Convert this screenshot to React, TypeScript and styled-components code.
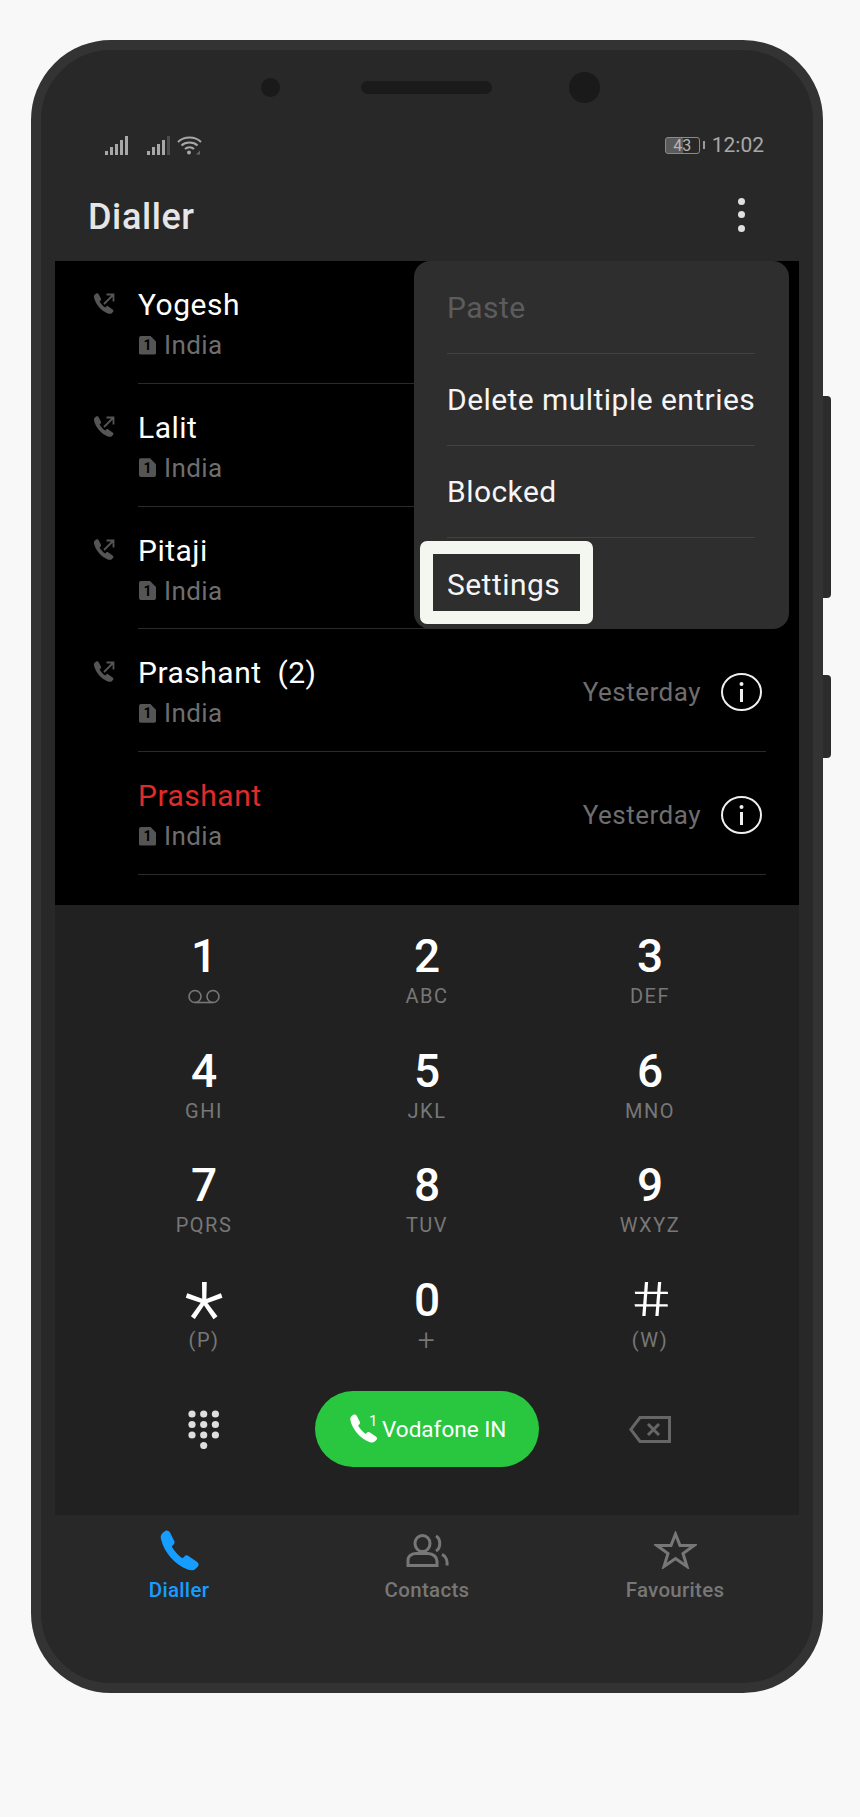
import styled, { createGlobalStyle } from "styled-components";

const GlobalStyle = createGlobalStyle`
    html, body {
        margin: 0;
        background: #f8f8f8;
        font-family: Roboto, "Liberation Sans", sans-serif;
    }
    * { box-sizing: border-box; }
`;

// phone body
const Page = styled.div`
    width: 860px;
    height: 1817px;
    padding: 40px 37px 0 31px;
`;
const Phone = styled.div`
    position: relative;
    width: 792px;
    height: 1653px;
    padding: 0 14px;
    display: flex;
    flex-direction: column;
    background: #282828;
    border: solid #333333;
    border-width: 10px 10px;
    border-radius: 80px;
`;
const SideButton = styled.div<{ $top: number; $height: number }>`
    position: absolute;
    right: -18px;
    top: ${(p) => p.$top}px;
    width: 8px;
    height: ${(p) => p.$height}px;
    background: #2c2c2c;
    border-radius: 0 4px 4px 0;
`;

// camera + speaker
const Sensors = styled.div`
    height: 74px;
    flex-shrink: 0;
    padding-left: 206px;
    display: flex;
    align-items: center;
`;
const Lens = styled.div<{ $size: number; $gap: number }>`
    width: ${(p) => p.$size}px;
    height: ${(p) => p.$size}px;
    margin-right: ${(p) => p.$gap}px;
    border-radius: 50%;
    background: #1a1a1a;
`;
const Speaker = styled.div`
    width: 131px;
    height: 13px;
    margin-right: 77px;
    border-radius: 7px;
    background: #1a1a1a;
`;

// status bar
const StatusBar = styled.div`
    height: 44px;
    flex-shrink: 0;
    padding: 0 35px 2px 50px;
    display: flex;
    align-items: center;
    color: #a8a8a8;
`;
const SignalIcons = styled.div`
    display: flex;
    align-items: flex-end;
    gap: 7px;
    flex: 1;
`;
const SimSignal = styled.div`
    display: flex;
    margin-right: 12px;
`;
const Battery = styled.div`
    position: relative;
    width: 35px;
    height: 17px;
    margin-right: 2px;
    border: 1.5px solid #8a8a8a;
    border-radius: 3px;
    display: flex;
    align-items: center;
    justify-content: center;
    font-size: 16px;
    color: #b5b5b5;
    background: linear-gradient(90deg, #5a5a5a 50%, transparent 50%);
    &::after {
        content: "";
        position: absolute;
        right: -6px;
        top: 3px;
        width: 2px;
        height: 8px;
        background: #9a9a9a;
    }
`;
const Clock = styled.div`
    margin-left: 10px;
    font-size: 21px;
    line-height: 26px;
`;

// title bar
const TitleBar = styled.div`
    height: 93px;
    flex-shrink: 0;
    padding: 0 54px 0 33px;
    display: flex;
    align-items: center;
    justify-content: space-between;
`;
const Title = styled.h1`
    margin: 5px 0 0;
    font-size: 36px;
    font-weight: 500;
    letter-spacing: 0.6px;
    color: #e6e6e6;
`;
const MoreDots = styled.div`
    display: flex;
    flex-direction: column;
    gap: 6.5px;
`;
const MoreDot = styled.span`
    width: 7px;
    height: 7px;
    border-radius: 50%;
    background: #e0e0e0;
`;

// call list
const List = styled.div`
    position: relative;
    height: 644px;
    flex-shrink: 0;
    background: #000;
`;
const Row = styled.div`
    height: 122.75px;
    padding-left: 38px;
    display: flex;
`;
const CallIconSlot = styled.div`
    width: 22px;
    margin-right: 23px;
    padding-top: 32px;
    flex-shrink: 0;
`;
const RowBody = styled.div`
    flex: 1;
    margin-right: 33px;
    padding-top: 22px;
    display: flex;
    border-bottom: 1px solid #2a2a2a;
`;
const RowText = styled.div`
    flex: 1;
`;
const Name = styled.div<{ $missed?: boolean }>`
    font-size: 30px;
    line-height: 44px;
    letter-spacing: 0.5px;
    white-space: pre;
    color: ${(p) => (p.$missed ? "#e02b2b" : "#fff")};
`;
const Region = styled.div`
    margin-top: 2px;
    display: flex;
    align-items: center;
    gap: 8px;
    font-size: 26px;
    line-height: 32px;
    letter-spacing: 0.4px;
    color: #6e6e6e;
`;
const SimBadge = styled.span`
    margin-left: 1px;
    width: 17px;
    height: 19px;
    display: flex;
    align-items: center;
    justify-content: center;
    font-size: 14px;
    font-weight: 700;
    letter-spacing: 0;
    color: #000;
    background: #555;
    border-radius: 2px;
    clip-path: polygon(0 0, 65% 0, 100% 32%, 100% 100%, 0 100%);
`;
const RowTime = styled.div`
    margin: 0 20px 0 0;
    font-size: 26px;
    line-height: 82px;
    letter-spacing: 0.5px;
    color: #6e6e6e;
`;
const InfoSlot = styled.div`
    margin-right: 4px;
    height: 82px;
    display: flex;
    align-items: center;
`;

// popup menu
const Menu = styled.div`
    position: absolute;
    top: 0;
    right: 10px;
    width: 375px;
    height: 368px;
    padding: 1px 34px 0 33px;
    background: #2e2e2e;
    border-radius: 16px;
`;
const MenuItem = styled.div<{ $disabled?: boolean; $last?: boolean }>`
    position: relative;
    height: 92px;
    display: flex;
    align-items: center;
    font-size: 30px;
    letter-spacing: 0.45px;
    white-space: nowrap;
    color: ${(p) => (p.$disabled ? "#5c5c5c" : "#f5f5f5")};
    border-bottom: ${(p) => (p.$last ? "none" : "1px solid #424242")};
`;
const Highlight = styled.div`
    position: absolute;
    left: -27px;
    top: 3px;
    width: 173px;
    height: 83px;
    border: 13px solid #f4f7f0;
    border-radius: 7px;
`;

// keypad
const Keypad = styled.div`
    height: 610px;
    flex-shrink: 0;
    padding: 27px 37.5px 0;
    background: #212121;
    display: grid;
    grid-template-columns: repeat(3, 223px);
    grid-auto-rows: 114.5px;
`;
const Key = styled.div`
    display: flex;
    flex-direction: column;
    align-items: center;
`;
const Digit = styled.div`
    height: 48px;
    font-size: 46px;
    font-weight: 500;
    line-height: 48px;
    color: #fff;
`;
const StarDigit = styled(Digit)`
    font-size: 92px;
    font-weight: 300;
    transform: translateY(17px);
`;
const HashDigit = styled(Digit)`
    font-size: 48px;
    font-weight: 300;
    transform: skewX(10deg) scaleX(1.35);
`;
const KeySub = styled.div<{ $large?: boolean }>`
    height: 28px;
    margin-top: 2px;
    display: flex;
    align-items: center;
    font-size: ${(p) => (p.$large ? 30 : 20)}px;
    font-weight: ${(p) => (p.$large ? 300 : 400)};
    letter-spacing: 1.5px;
    color: #777;
`;
const ActionCell = styled.div`
    height: 76px;
    margin-top: 1px;
    display: flex;
    align-items: center;
    justify-content: center;
`;
const CallButton = styled.div`
    position: relative;
    width: 224px;
    height: 76px;
    padding-left: 67px;
    flex-shrink: 0;
    display: flex;
    align-items: center;
    border-radius: 38px;
    background: #29c740;
    color: #fff;
    font-size: 22.5px;
`;
const CallPhone = styled.span`
    position: absolute;
    left: 34px;
    top: 23px;
    display: flex;
`;
const SimNumber = styled.span`
    position: absolute;
    left: 54px;
    top: 21px;
    font-size: 15px;
    line-height: 18px;
`;

// bottom tabs
const TabBar = styled.div`
    flex: 1;
    display: grid;
    grid-template-columns: repeat(3, 1fr);
`;
const Tab = styled.div<{ $active?: boolean }>`
    padding-top: 16px;
    display: flex;
    flex-direction: column;
    align-items: center;
    font-size: 20.5px;
    font-weight: 500;
    letter-spacing: 0.3px;
    color: ${(p) => (p.$active ? "#159eff" : "#777")};
`;
const TabIcon = styled.div`
    height: 38px;
    margin-bottom: 9px;
    display: flex;
    align-items: center;
`;

const HANDSET =
    "M6 1C8 0 10 1 11 3L15 11C15.5 12.5 15 13.5 14 14.5L12.5 16C14.5 20 19 25 23 27.5L25 25.5C26 24.5 27.5 24.5 29 25.5L37 31C39 32.5 39 34 38 35.5L35.5 38C34 39.5 31 39.5 28 38.5C16 34 5 22 2 9C1.2 6 2 3.5 6 1Z";

const Handset = ({ size, color }: { size: number; color: string }) => (
    <svg width={size} height={size} viewBox="0 0 40 40">
        <path d={HANDSET} fill={color} />
    </svg>
);

const OutgoingCall = () => (
    <svg width="22" height="21" viewBox="0 0 22 21">
        <path d={HANDSET} fill="#555" transform="scale(0.53)" />
        <path d="M11 11L20 2M13.5 1.5H20.5V8.5" fill="none" stroke="#555" strokeWidth="1.8" />
    </svg>
);

const Signal = ({ dimLast }: { dimLast?: boolean }) => (
    <svg width="23" height="19" viewBox="0 0 23 19">
        {[4, 8, 11, 15, 19].map((h, i) => (
            <rect
                key={i}
                x={i * 5}
                y={19 - h}
                width="3"
                height={h}
                fill={dimLast && i === 4 ? "#4c4c4c" : "#a8a8a8"}
            />
        ))}
    </svg>
);

const Wifi = () => (
    <svg width="25" height="19" viewBox="0 0 25 19" fill="none" stroke="#a8a8a8" strokeWidth="2">
        <path d="M1 6C7 0 18 0 24 6" />
        <path d="M4.5 9.5C8.5 5.5 16.5 5.5 20.5 9.5" />
        <path d="M8 13C10.5 10.5 14.5 10.5 17 13" />
        <circle cx="12" cy="16.5" r="2" fill="#a8a8a8" stroke="none" />
        <path d="M19 18.5L23 14.5V18.5Z" fill="#666" stroke="none" />
    </svg>
);

const InfoIcon = () => (
    <svg width="41" height="38" viewBox="0 0 41 38" fill="none">
        <ellipse cx="20.5" cy="19" rx="19.5" ry="18" stroke="#f0f0f0" strokeWidth="2" />
        <circle cx="20.5" cy="11" r="2" fill="#f0f0f0" />
        <rect x="19" y="16" width="3" height="13" fill="#f0f0f0" />
    </svg>
);

const DialpadIcon = () => (
    <svg width="32" height="39" viewBox="0 0 32 39">
        {[0, 1, 2].map((r) =>
            [0, 1, 2].map((c) => (
                <circle key={`${r}-${c}`} cx={4 + c * 11.7} cy={4 + r * 10.5} r="3.6" fill="#dedede" />
            ))
        )}
        <circle cx="15.7" cy="35.5" r="3.6" fill="#dedede" />
    </svg>
);

const BackspaceIcon = () => (
    <svg width="42" height="27" viewBox="0 0 42 27" fill="none" stroke="#666" strokeWidth="3">
        <path d="M11 1.5H40.5V25.5H11L1.8 13.5Z" />
        <path d="M19 8L30 19M30 8L19 19" />
    </svg>
);

const ContactsIcon = () => (
    <svg width="43" height="33" viewBox="0 0 43 33" fill="none" stroke="#777" strokeWidth="3">
        <ellipse cx="16.5" cy="9.5" rx="7.5" ry="8" />
        <path d="M30 2C35 5 35 14 30 17" />
        <path d="M2 31.5V26C2 22 6 19.5 10 19.5H22C27 19.5 31 23 31 27V31.5Z" />
        <path d="M36 20.5C40 22 41.5 27 41 31.5" />
    </svg>
);

const StarIcon = () => (
    <svg width="43" height="38" viewBox="0 0 43 38" fill="none" stroke="#777" strokeWidth="3">
        <path d="M21.5 3L26 14.5H40L29 22.5L33 35.5L21.5 27.5L10 35.5L14 22.5L3 14.5H17Z" />
    </svg>
);

type Call = { name: string; outgoing?: boolean; missed?: boolean; time?: string };

const calls: Call[] = [
    { name: "Yogesh", outgoing: true },
    { name: "Lalit", outgoing: true },
    { name: "Pitaji", outgoing: true },
    { name: "Prashant  (2)", outgoing: true, time: "Yesterday" },
    { name: "Prashant", missed: true, time: "Yesterday" },
];

const keys = [
    ["2", "ABC"],
    ["3", "DEF"],
    ["4", "GHI"],
    ["5", "JKL"],
    ["6", "MNO"],
    ["7", "PQRS"],
    ["8", "TUV"],
    ["9", "WXYZ"],
];

export default function App() {
    return (
        <Page>
            <GlobalStyle />
            <Phone>
                <SideButton $top={346} $height={202} />
                <SideButton $top={625} $height={83} />

                <Sensors>
                    <Lens $size={19} $gap={81} />
                    <Speaker />
                    <Lens $size={31} $gap={0} />
                </Sensors>

                <StatusBar>
                    <SignalIcons>
                        <SimSignal>
                            <Signal />
                        </SimSignal>
                        <Signal dimLast />
                        <Wifi />
                    </SignalIcons>
                    <Battery>43</Battery>
                    <Clock>12:02</Clock>
                </StatusBar>

                <TitleBar>
                    <Title>Dialler</Title>
                    <MoreDots>
                        <MoreDot />
                        <MoreDot />
                        <MoreDot />
                    </MoreDots>
                </TitleBar>

                <List>
                    {calls.map((call, i) => (
                        <Row key={i}>
                            <CallIconSlot>{call.outgoing && <OutgoingCall />}</CallIconSlot>
                            <RowBody>
                                <RowText>
                                    <Name $missed={call.missed}>{call.name}</Name>
                                    <Region>
                                        <SimBadge>1</SimBadge>
                                        India
                                    </Region>
                                </RowText>
                                {call.time && (
                                    <>
                                        <RowTime>{call.time}</RowTime>
                                        <InfoSlot>
                                            <InfoIcon />
                                        </InfoSlot>
                                    </>
                                )}
                            </RowBody>
                        </Row>
                    ))}
                    <Menu>
                        <MenuItem $disabled>Paste</MenuItem>
                        <MenuItem>Delete multiple entries</MenuItem>
                        <MenuItem>Blocked</MenuItem>
                        <MenuItem $last>
                            Settings
                            <Highlight />
                        </MenuItem>
                    </Menu>
                </List>

                <Keypad>
                    <Key>
                        <Digit>1</Digit>
                        <KeySub>
                            <svg width="34" height="15" viewBox="0 0 34 15" fill="none" stroke="#777" strokeWidth="1.6">
                                <circle cx="8" cy="7.5" r="6" />
                                <circle cx="26" cy="7.5" r="6" />
                                <path d="M8 13.5H26" />
                            </svg>
                        </KeySub>
                    </Key>
                    {keys.map(([digit, letters]) => (
                        <Key key={digit}>
                            <Digit>{digit}</Digit>
                            <KeySub>{letters}</KeySub>
                        </Key>
                    ))}
                    <Key>
                        <StarDigit>*</StarDigit>
                        <KeySub>(P)</KeySub>
                    </Key>
                    <Key>
                        <Digit>0</Digit>
                        <KeySub $large>+</KeySub>
                    </Key>
                    <Key>
                        <HashDigit>#</HashDigit>
                        <KeySub>(W)</KeySub>
                    </Key>
                    <ActionCell>
                        <DialpadIcon />
                    </ActionCell>
                    <ActionCell>
                        <CallButton>
                            <CallPhone>
                                <Handset size={29} color="#fff" />
                            </CallPhone>
                            <SimNumber>1</SimNumber>
                            Vodafone IN
                        </CallButton>
                    </ActionCell>
                    <ActionCell>
                        <BackspaceIcon />
                    </ActionCell>
                </Keypad>

                <TabBar>
                    <Tab $active>
                        <TabIcon>
                            <Handset size={41} color="#159eff" />
                        </TabIcon>
                        Dialler
                    </Tab>
                    <Tab>
                        <TabIcon>
                            <ContactsIcon />
                        </TabIcon>
                        Contacts
                    </Tab>
                    <Tab>
                        <TabIcon>
                            <StarIcon />
                        </TabIcon>
                        Favourites
                    </Tab>
                </TabBar>
            </Phone>
        </Page>
    );
}
